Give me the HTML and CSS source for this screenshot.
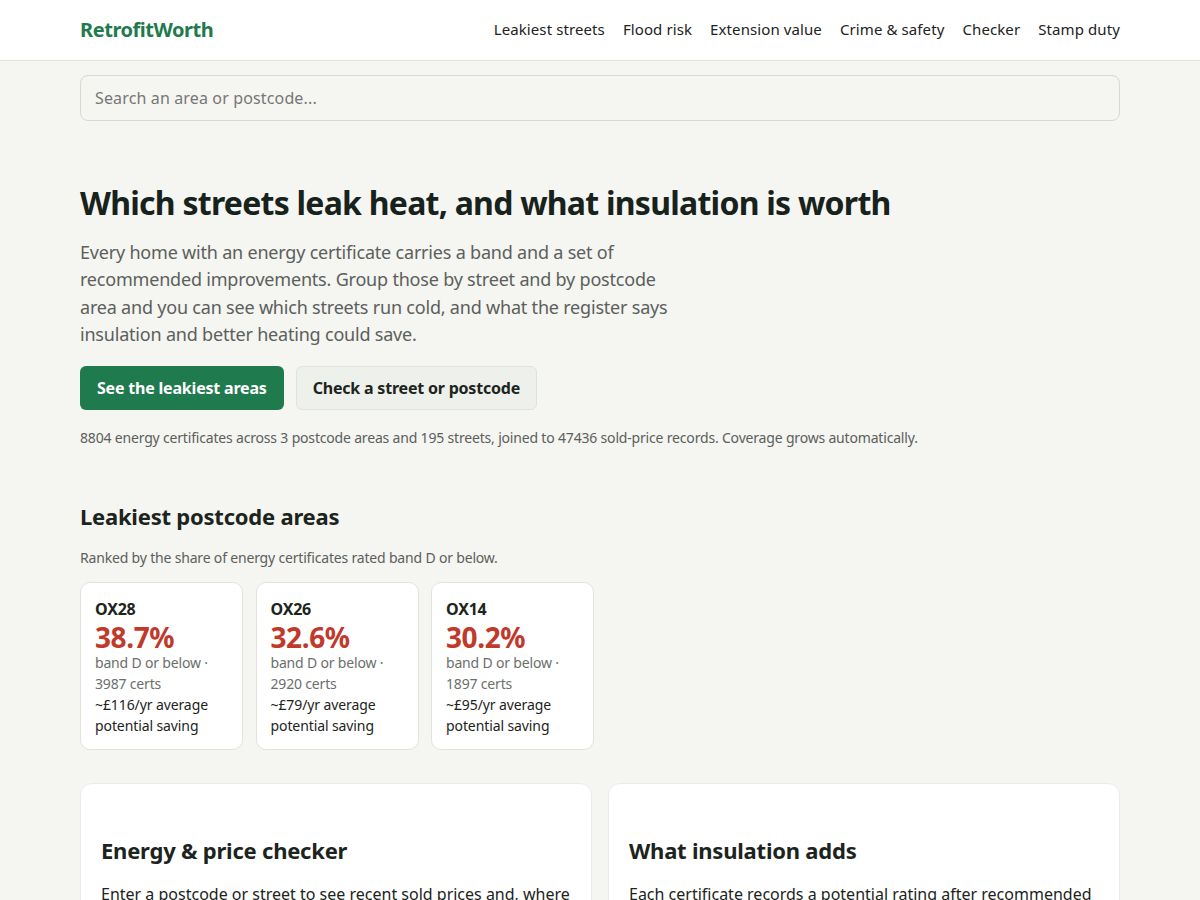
FILE: index.html
```html
<!DOCTYPE html>
<html lang="en">
<head>
<meta charset="utf-8">
<title>RetrofitWorth</title>
<link rel="stylesheet" href="styles.css">
</head>
<body>
<header class="site-header">
  <div class="wrap header-inner">
    <a class="logo" href="#">RetrofitWorth</a>
    <nav class="nav">
      <a href="#">Leakiest streets</a>
      <a href="#">Flood risk</a>
      <a href="#">Extension value</a>
      <a href="#">Crime &amp; safety</a>
      <a href="#">Checker</a>
      <a href="#">Stamp duty</a>
    </nav>
  </div>
</header>
<main class="wrap">
  <div class="search-row">
    <input class="search" type="text" placeholder="Search an area or postcode...">
  </div>
  <section class="hero">
    <h1>Which streets leak heat, and what insulation is worth</h1>
    <p class="lede">Every home with an energy certificate carries a band and a set of recommended improvements. Group those by street and by postcode area and you can see which streets run cold, and what the register says insulation and better heating could save.</p>
    <div class="actions">
      <a class="btn btn-primary" href="#">See the leakiest areas</a>
      <a class="btn btn-secondary" href="#">Check a street or postcode</a>
    </div>
    <p class="meta">8804 energy certificates across 3 postcode areas and 195 streets, joined to 47436 sold-price records. Coverage grows automatically.</p>
  </section>
  <section class="areas">
    <h2>Leakiest postcode areas</h2>
    <p class="sub">Ranked by the share of energy certificates rated band D or below.</p>
    <div class="area-grid">
      <div class="area-card">
        <div class="code">OX28</div>
        <div class="pct">38.7%</div>
        <div class="note">band D or below · 3987 certs</div>
        <div class="saving">~£116/yr average potential saving</div>
      </div>
      <div class="area-card">
        <div class="code">OX26</div>
        <div class="pct">32.6%</div>
        <div class="note">band D or below · 2920 certs</div>
        <div class="saving">~£79/yr average potential saving</div>
      </div>
      <div class="area-card">
        <div class="code">OX14</div>
        <div class="pct">30.2%</div>
        <div class="note">band D or below · 1897 certs</div>
        <div class="saving">~£95/yr average potential saving</div>
      </div>
    </div>
  </section>
  <section class="panels">
    <div class="panel">
      <h2>Energy &amp; price checker</h2>
      <p>Enter a postcode or street to see recent sold prices and, where available, the energy band and potential savings for homes nearby.</p>
    </div>
    <div class="panel">
      <h2>What insulation adds</h2>
      <p>Each certificate records a potential rating after recommended improvements, so you can see what insulation and heating upgrades are worth.</p>
    </div>
  </section>
</main>
</body>
</html>
```

FILE: styles.css
```css
* { box-sizing: border-box; }
html, body { margin: 0; padding: 0; }
body {
  font-family: "Noto Sans", "Open Sans", sans-serif;
  background: #f5f5f1;
  color: #1c2420;
}
a { text-decoration: none; color: inherit; }
.wrap { width: 1040px; margin: 0 auto; }

.site-header {
  background: #ffffff;
  border-bottom: 1px solid #e2e2dc;
  height: 61px;
}
.header-inner {
  height: 60px;
  padding-bottom: 2px;
  display: flex;
  align-items: center;
  justify-content: space-between;
}
.logo {
  font-size: 20px;
  font-weight: 700;
  color: #1f7a4d;
  letter-spacing: -0.45px;
}
.nav { display: flex; gap: 18px; }
.nav a { font-size: 15px; color: #222; letter-spacing: 0.1px; }

.search-row { padding-top: 14px; }
.search {
  width: 100%;
  height: 46px;
  border: 1px solid #d9d9d4;
  border-radius: 8px;
  background: #f5f5f1;
  padding: 0 14px;
  font-family: inherit;
  font-size: 16px;
  letter-spacing: 0.14px;
  color: #333;
}
.search::placeholder { color: #777; }

.hero { padding-top: 62px; }
h1 {
  margin: 0;
  font-size: 32px;
  font-weight: 700;
  line-height: 40px;
  letter-spacing: -0.75px;
  color: #17221c;
}
.lede {
  margin: 16px 0 0;
  max-width: 600px;
  font-size: 18px;
  line-height: 27.3px;
  letter-spacing: -0.2px;
  color: #5b605c;
}
.actions { display: flex; gap: 12px; margin-top: 18px; }
.btn {
  display: inline-flex;
  align-items: center;
  height: 44px;
  padding: 0 17px;
  border-radius: 6px;
  font-size: 16px;
  font-weight: 700;
  letter-spacing: -0.2px;
}
.btn-primary { background: #1f7a4d; color: #fff; }
.btn-secondary { background: #eef0eb; color: #1c2420; border: 1px solid #dfe3dc; padding: 0 16px; }
.meta {
  margin: 17px 0 0;
  font-size: 14px;
  line-height: 21px;
  letter-spacing: -0.18px;
  color: #5b605c;
}

.areas { padding-top: 53px; }
.areas h2 {
  margin: 0;
  font-size: 22px;
  line-height: 30px;
  font-weight: 700;
  letter-spacing: -0.22px;
  color: #1c2420;
}
.sub {
  margin: 16px 0 0;
  font-size: 14px;
  line-height: 21px;
  letter-spacing: -0.18px;
  color: #5b605c;
}
.area-grid { display: flex; gap: 12.5px; margin-top: 14px; }
.area-card {
  width: 163px;
  background: #fff;
  border: 1px solid #e3e3de;
  border-radius: 10px;
  padding: 15px 14px 13px;
}
.code { font-size: 16px; font-weight: 700; line-height: 22px; letter-spacing: -0.2px; color: #1c2420; }
.pct { font-size: 28px; font-weight: 700; line-height: 30px; margin-top: 2px; letter-spacing: -0.4px; color: #c0392b; }
.note { font-size: 14px; line-height: 21px; letter-spacing: -0.18px; color: #6b6f6b; }
.saving { font-size: 14px; line-height: 21px; letter-spacing: -0.1px; color: #1c2420; }

.panels {
  display: grid;
  grid-template-columns: 1fr 1fr;
  gap: 16px;
  margin-top: 33px;
}
.panel {
  background: #fff;
  border: 1px solid #ecece7;
  border-radius: 12px;
  padding: 51px 20px 24px;
  min-height: 200px;
}
.panel h2 {
  margin: 0;
  font-size: 22px;
  line-height: 30px;
  font-weight: 700;
  letter-spacing: -0.22px;
  color: #1c2420;
}
.panel p {
  margin: 17px 0 0;
  font-size: 16px;
  line-height: 24px;
  color: #1c2420;
}
```
